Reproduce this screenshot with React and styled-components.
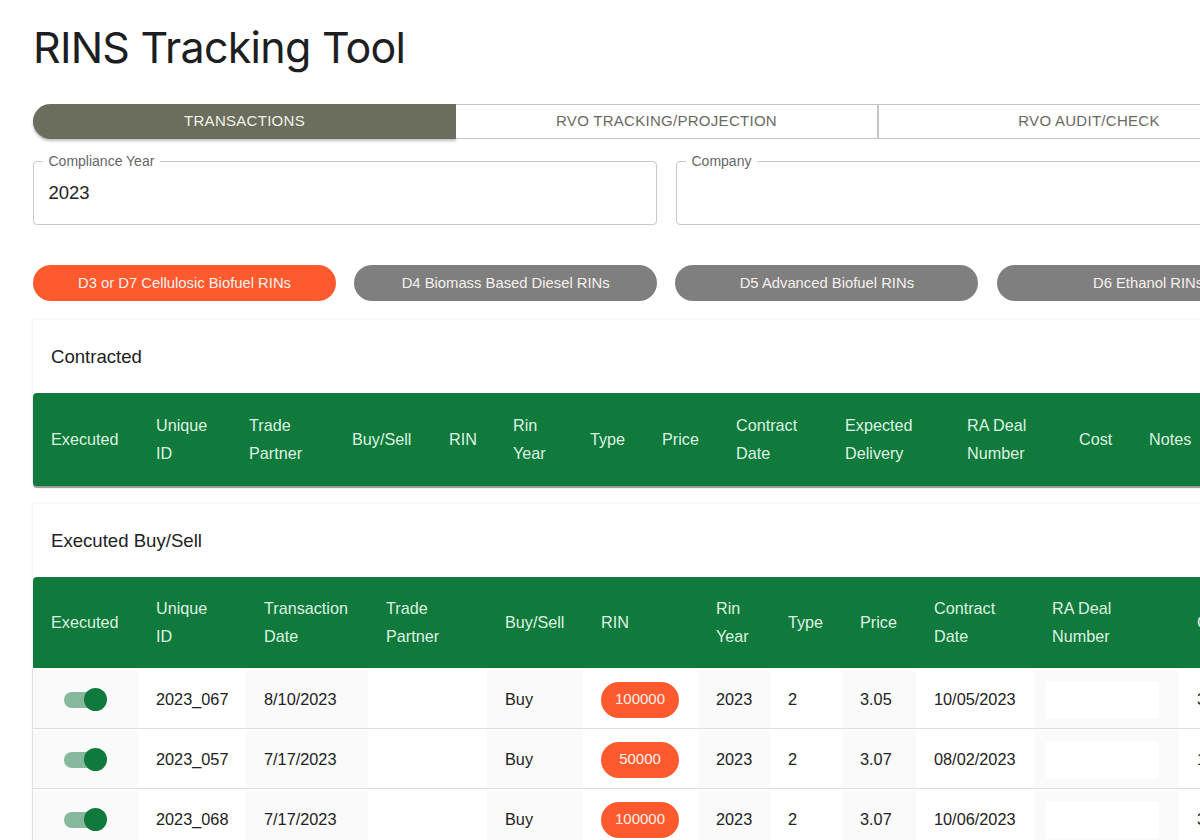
import React from 'react';
import styled, { createGlobalStyle } from 'styled-components';

const GlobalStyle = createGlobalStyle`
  html, body {
    margin: 0;
    padding: 0;
    height: 840px;
    overflow: hidden;
    background: #fff;
  }
  * { box-sizing: border-box; }
`;

const Page = styled.div`
  width: 1300px;
  height: 840px;
  padding: 18px 0 0 33px;
  overflow: hidden;
  font-family: "Liberation Sans", Arial, sans-serif;
  color: #222;
`;

const Title = styled.h1`
  margin: 0 0 27px;
  height: 59px;
  font-family: Inter, "Liberation Sans", sans-serif;
  font-size: 43px;
  line-height: 59px;
  font-weight: 400;
  letter-spacing: -0.75px;
  color: #1c1e21;
`;

const Tabs = styled.div`
  display: flex;
  width: 1267px;
  height: 35px;
`;

const Tab = styled.div`
  display: flex;
  align-items: center;
  justify-content: center;
  padding-bottom: 2px;
  font-size: 15px;
  letter-spacing: 0.28px;
  color: ${(p) => (p.$active ? '#f1f1ec' : '#6a6a62')};
  background: ${(p) => (p.$active ? '#6c6e5d' : '#fff')};
  border: ${(p) => (p.$active ? 'none' : '1px solid #c4c4c4')};
  border-left: ${(p) => (p.$divider ? '1px solid #c4c4c4' : 'none')};
  border-radius: ${(p) => (p.$active ? '18px 0 0 18px' : '0')};
  box-shadow: ${(p) => (p.$active ? '0 2px 3px rgba(0, 0, 0, 0.25)' : 'none')};
  flex: 0 0 ${(p) => (p.$active ? '423px' : '422px')};
`;

const Fields = styled.div`
  display: flex;
  gap: 19px;
  margin-top: 14px;
`;

const Field = styled.fieldset`
  flex: 0 0 624px;
  height: 72px;
  margin: 0;
  padding: 0 14.5px;
  border: 1px solid #c8c8c8;
  border-radius: 4px;
`;

const FieldLabel = styled.legend`
  padding: 0 6px;
  margin-left: -6px;
  font-size: 14px;
  line-height: 16px;
  color: #666;
`;

const FieldValue = styled.div`
  margin-top: 13px;
  font-size: 18.5px;
  line-height: 22px;
  color: #222;
`;

const Pills = styled.div`
  display: flex;
  gap: 18.2px;
  margin-top: 40px;
`;

const Pill = styled.div`
  flex: 0 0 303px;
  height: 36px;
  display: flex;
  align-items: center;
  justify-content: center;
  border-radius: 18px;
  font-size: 14.8px;
  color: #f6f1ee;
  background: ${(p) => (p.$active ? '#ff5a2e' : '#7f7f7f')};
`;

const Card = styled.section`
  width: 1267px;
  margin-top: ${(p) => p.$gap}px;
  box-shadow: 0 0 3px rgba(0, 0, 0, 0.1);
  background: #fff;
`;

const CardTitle = styled.h2`
  margin: 0;
  height: 73px;
  padding: 0 18px;
  display: flex;
  align-items: center;
  font-size: 18.6px;
  font-weight: 400;
  color: #222;
`;

const HeadRow = styled.div`
  display: grid;
  grid-template-columns: ${(p) => p.$cols};
  height: ${(p) => p.$height}px;
  background: #10793c;
  border-radius: ${(p) => (p.$raised ? '4px' : '4px 4px 0 0')};
  box-shadow: ${(p) => (p.$raised ? '0 2px 1px rgba(70, 70, 60, 0.55)' : 'none')};
`;

const HeadCell = styled.div`
  display: flex;
  align-items: center;
  padding-left: 18px;
  font-size: 16.2px;
  line-height: 27.5px;
  color: #dcf3e1;
`;

const RowList = styled.div`
  padding-top: 1px;
  box-shadow: -1px 0 0 #e2e2e2;
`;

const BodyRow = styled.div`
  display: grid;
  grid-template-columns: ${(p) => p.$cols};
  height: 60px;
  border-bottom: 1px solid #dedede;
`;

const BodyCell = styled.div`
  display: flex;
  align-items: center;
  margin-top: 2px;
  padding-left: 18px;
  font-size: 16.3px;
  color: #222;
  background: ${(p) => (p.$shaded ? '#fafafa' : '#fff')};
`;

const ToggleTrack = styled.div`
  position: relative;
  width: 36px;
  height: 16px;
  margin-left: 13px;
  border-radius: 8px;
  background: #87b89b;
`;

const ToggleThumb = styled.span`
  position: absolute;
  top: -4px;
  right: -7px;
  width: 23px;
  height: 23px;
  border-radius: 50%;
  background: #10793c;
`;

const Amount = styled.div`
  width: 78px;
  height: 36px;
  display: flex;
  align-items: center;
  justify-content: center;
  padding-bottom: 2px;
  border-radius: 18px;
  font-size: 15px;
  color: #fdf0ea;
  background: #ff5a2e;
`;

const Redacted = styled.div`
  width: 113px;
  height: 38px;
  margin-left: -6px;
  border-radius: 3px;
  background: #fff;
`;

const contractedCols = '105px 93px 103px 97px 64px 77px 72px 74px 109px 122px 112px 70px 169px';
const executedCols = '105px 108px 122px 119px 96px 115px 72px 72px 74px 118px 145px 121px';

const contractedHead = [
  'Executed', 'Unique ID', 'Trade Partner', 'Buy/Sell', 'RIN', 'Rin Year', 'Type', 'Price',
  'Contract Date', 'Expected Delivery', 'RA Deal Number', 'Cost', 'Notes',
];

const executedHead = [
  'Executed', 'Unique ID', 'Transaction Date', 'Trade Partner', 'Buy/Sell', 'RIN', 'Rin Year',
  'Type', 'Price', 'Contract Date', 'RA Deal Number', 'Cost',
];

const rows = [
  { id: '2023_067', date: '8/10/2023', rin: '100000', price: '3.05', contract: '10/05/2023', cost: '305000' },
  { id: '2023_057', date: '7/17/2023', rin: '50000', price: '3.07', contract: '08/02/2023', cost: '153500' },
  { id: '2023_068', date: '7/17/2023', rin: '100000', price: '3.07', contract: '10/06/2023', cost: '307000' },
];

const headLabel = (label) => {
  const words = label.split(' ');
  if (words.length === 1) return label;
  const last = words.pop();
  return <span>{words.join(' ')}<br />{last}</span>;
};

const App = () => (
  <>
    <GlobalStyle />
    <Page>
      <Title>RINS Tracking Tool</Title>
      <Tabs>
        <Tab $active>TRANSACTIONS</Tab>
        <Tab>RVO TRACKING/PROJECTION</Tab>
        <Tab $divider>RVO AUDIT/CHECK</Tab>
      </Tabs>
      <Fields>
        <Field>
          <FieldLabel>Compliance Year</FieldLabel>
          <FieldValue>2023</FieldValue>
        </Field>
        <Field>
          <FieldLabel>Company</FieldLabel>
        </Field>
      </Fields>
      <Pills>
        <Pill $active>D3 or D7 Cellulosic Biofuel RINs</Pill>
        <Pill>D4 Biomass Based Diesel RINs</Pill>
        <Pill>D5 Advanced Biofuel RINs</Pill>
        <Pill>D6 Ethanol RINs</Pill>
      </Pills>
      <Card $gap={19}>
        <CardTitle>Contracted</CardTitle>
        <HeadRow $cols={contractedCols} $height={93} $raised>
          {contractedHead.map((label) => (
            <HeadCell key={label}>{headLabel(label)}</HeadCell>
          ))}
        </HeadRow>
      </Card>
      <Card $gap={18}>
        <CardTitle>Executed Buy/Sell</CardTitle>
        <HeadRow $cols={executedCols} $height={91}>
          {executedHead.map((label) => (
            <HeadCell key={label}>{headLabel(label)}</HeadCell>
          ))}
        </HeadRow>
        <RowList>
          {rows.map((row) => (
            <BodyRow $cols={executedCols} key={row.id}>
              <BodyCell $shaded>
                <ToggleTrack><ToggleThumb /></ToggleTrack>
              </BodyCell>
              <BodyCell>{row.id}</BodyCell>
              <BodyCell $shaded>{row.date}</BodyCell>
              <BodyCell />
              <BodyCell $shaded>Buy</BodyCell>
              <BodyCell><Amount>{row.rin}</Amount></BodyCell>
              <BodyCell $shaded>2023</BodyCell>
              <BodyCell>2</BodyCell>
              <BodyCell $shaded>{row.price}</BodyCell>
              <BodyCell>{row.contract}</BodyCell>
              <BodyCell $shaded><Redacted /></BodyCell>
              <BodyCell>{row.cost}</BodyCell>
            </BodyRow>
          ))}
        </RowList>
      </Card>
    </Page>
  </>
);

export default App;
